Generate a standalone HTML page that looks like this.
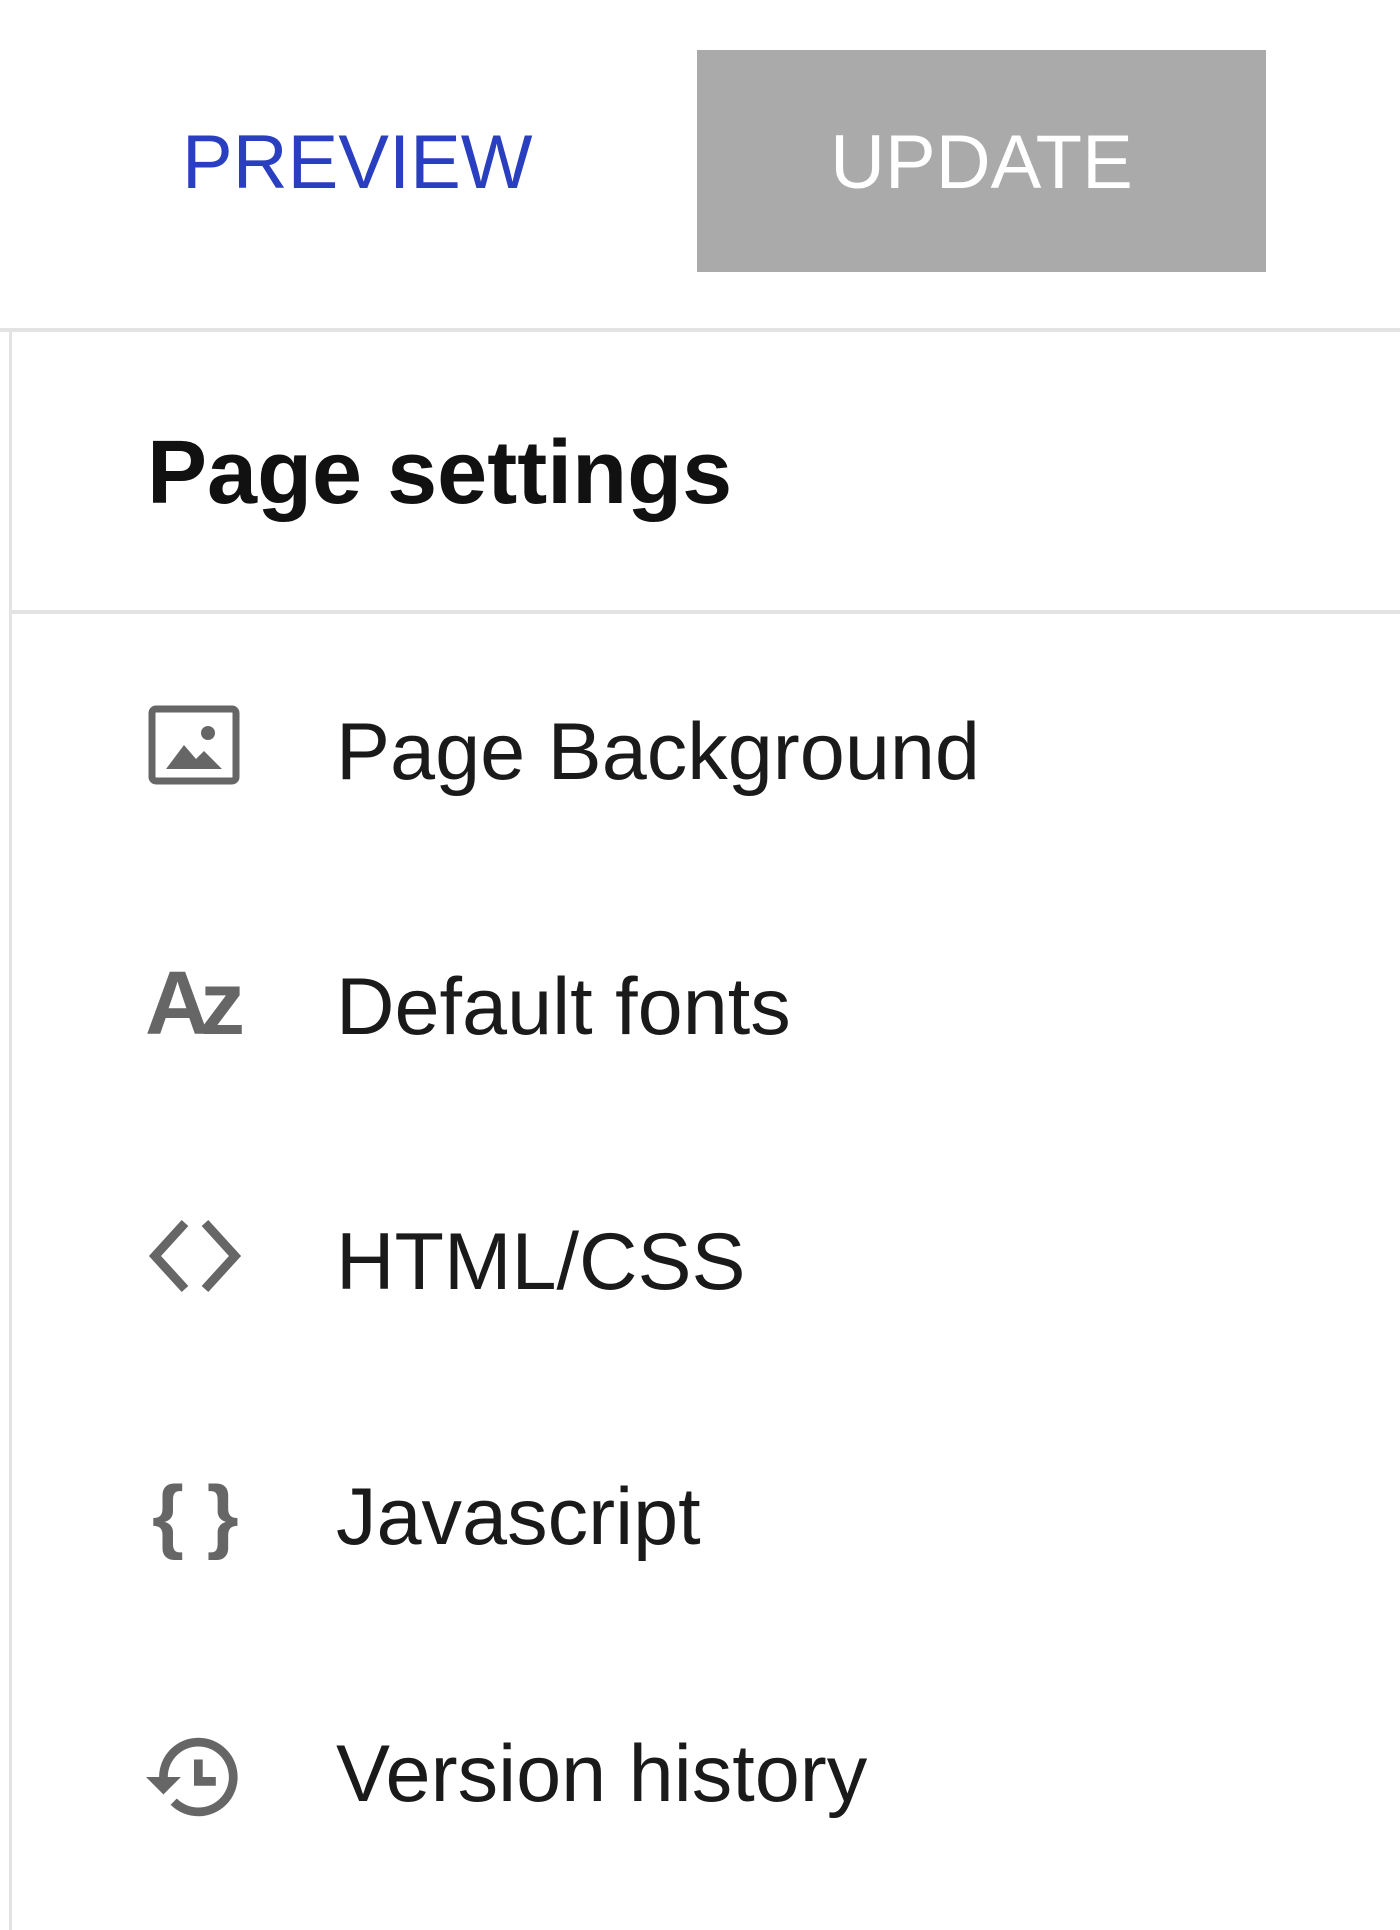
<!DOCTYPE html>
<html><head><meta charset="utf-8"><style>
body{margin:0;width:1400px;height:1922px;background:#fff;position:relative;overflow:hidden;font-family:"Liberation Sans",sans-serif}
.a{position:absolute;white-space:nowrap}
.it{font-size:81px;color:#1a1a1a;left:336px;line-height:1}
svg.ic{position:absolute}
</style></head><body>
<div class="a" style="left:182px;top:125px;font-size:76px;color:#2a3fbf;line-height:1">PREVIEW</div>
<div class="a" style="left:697px;top:50px;width:569px;height:222px;background:#aaa"></div>
<div class="a" style="left:697px;top:125px;width:569px;text-align:center;font-size:76px;color:#fff;line-height:1">UPDATE</div>
<div class="a" style="left:0;top:328px;width:1400px;height:4px;background:#e3e3e3"></div>
<div class="a" style="left:9px;top:330px;width:3px;height:1600px;background:#e3e3e3"></div>
<div class="a" style="left:147px;top:428px;font-size:90px;font-weight:bold;color:#111;line-height:1">Page settings</div>
<div class="a" style="left:10px;top:610px;width:1390px;height:4px;background:#e3e3e3"></div>

<svg class="ic" style="left:148px;top:705px" width="92" height="80" viewBox="0 0 92 80"><rect x="4" y="4" width="84" height="72" rx="4" fill="none" stroke="#666" stroke-width="7"/><circle cx="60" cy="28" r="7" fill="#666"/><polygon points="18,64 36,40 48,54 56,46 74,64" fill="#666"/></svg>
<div class="a it" style="top:712px">Page Background</div>

<svg class="ic" style="left:145px;top:962px" width="100" height="80" viewBox="0 0 100 80"><text x="0" y="72" font-family="Liberation Sans" font-weight="bold" font-size="90" fill="#666" letter-spacing="-10">Az</text></svg>
<div class="a it" style="top:967px">Default fonts</div>

<svg class="ic" style="left:145px;top:1218px" width="100" height="76" viewBox="0 0 100 76"><polyline points="40,5 10,38 40,71" fill="none" stroke="#666" stroke-width="9" stroke-linejoin="miter"/><polyline points="60,5 90,38 60,71" fill="none" stroke="#666" stroke-width="9"/></svg>
<div class="a it" style="top:1222px">HTML/CSS</div>

<div class="a" style="left:152px;top:1475px;font-size:82px;font-weight:bold;color:#666;line-height:1">{ }</div>
<div class="a it" style="top:1477px">Javascript</div>

<svg class="ic" style="left:146px;top:1729px" width="96" height="96" viewBox="1 1 22 22"><path d="M13 3a9 9 0 0 0-9 9H1l3.89 3.89.07.14L9 12H6c0-3.870 3.13-7 7-7s7 3.13 7 7-3.13 7-7 7c-1.93 0-3.68-.79-4.94-2.06l-1.42 1.42A8.954 8.954 0 0 0 13 21a9 9 0 0 0 0-18zm-1 5v6h5v-2h-3V8z" fill="#666"/></svg>
<div class="a it" style="top:1734px">Version history</div>
</body></html>
